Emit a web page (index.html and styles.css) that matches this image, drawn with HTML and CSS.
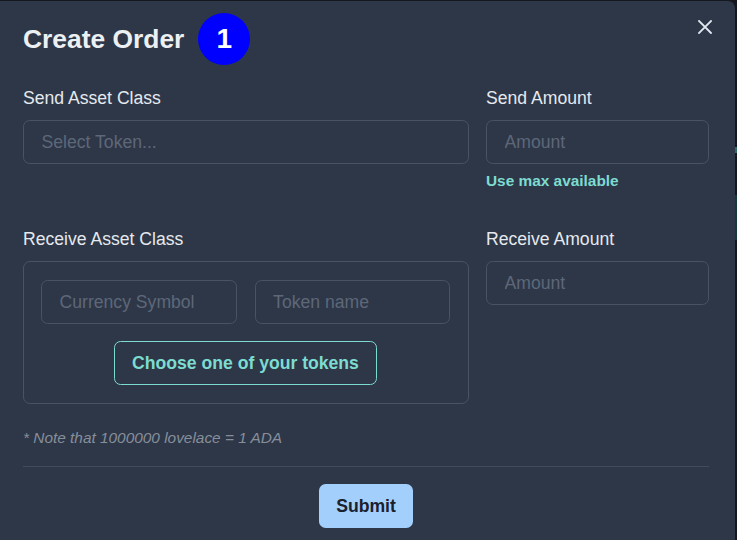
FILE: index.html
```html
<!DOCTYPE html>
<html lang="en">
<head>
<meta charset="utf-8">
<title>Create Order</title>
<link rel="stylesheet" href="styles.css">
</head>
<body>
<div class="modal">
  <header class="modal-header">
    <h2 class="title">Create Order</h2>
    <span class="badge">1</span>
    <button class="close" aria-label="Close">
      <svg width="14" height="14" viewBox="0 0 14 14"><path d="M1 1L13 13M13 1L1 13" stroke="#e2e8f0" stroke-width="1.8" stroke-linecap="square"/></svg>
    </button>
  </header>
  <div class="modal-body">
    <div class="grid">
      <div class="field">
        <label class="label">Send Asset Class</label>
        <input class="input" placeholder="Select Token...">
      </div>
      <div class="field">
        <label class="label">Send Amount</label>
        <input class="input" placeholder="Amount">
        <a class="helper">Use max available</a>
      </div>
      <div class="field">
        <label class="label">Receive Asset Class</label>
        <div class="box">
          <div class="pair">
            <input class="input" placeholder="Currency Symbol">
            <input class="input" placeholder="Token name">
          </div>
          <button class="outline-btn">Choose one of your tokens</button>
        </div>
      </div>
      <div class="field">
        <label class="label">Receive Amount</label>
        <input class="input" placeholder="Amount">
      </div>
    </div>
    <p class="note">* Note that 1000000 lovelace = 1 ADA</p>
  </div>
  <footer class="modal-footer">
    <button class="submit">Submit</button>
  </footer>
</div>
</body>
</html>
```
FILE: styles.css
```css
html, body {
  margin: 0;
  padding: 0;
  height: 100%;
  overflow: hidden;
}
body {
  background: linear-gradient(to bottom, #15181e 0 147px, #2f6b63 147px 153px, #15181e 153px 195px, #163a38 195px 240px, #15181e 240px);
  font-family: "Liberation Sans", Arial, sans-serif;
}
.modal {
  margin: 1px 2px 0 0;
  width: 735px;
  height: 560px;
  background: #2d3748;
  border-top-right-radius: 7px;
  position: relative;
  box-sizing: border-box;
  padding: 0 26px 0 23px;
}
.modal-header {
  display: flex;
  align-items: center;
  gap: 14px;
  padding-top: 12px;
  height: 52px;
}
.title {
  margin: 0;
  font-size: 26.4px;
  font-weight: 700;
  color: #edf0f3;
  line-height: 1;
}
.badge {
  width: 52px;
  height: 52px;
  border-radius: 50%;
  background: #0000ff;
  color: #ffffff;
  font-weight: 700;
  font-size: 28px;
  display: flex;
  align-items: center;
  justify-content: center;
}
.close {
  position: absolute;
  top: 18px;
  right: 22px;
  width: 16px;
  height: 16px;
  padding: 0;
  border: 0;
  background: transparent;
  display: flex;
  align-items: center;
  justify-content: center;
}
.modal-body {
  padding-top: 21px;
}
.grid {
  display: grid;
  grid-template-columns: 446px 223px;
  column-gap: 17px;
  row-gap: 35px;
  align-items: start;
}
.field {
  display: flex;
  flex-direction: column;
}
.label {
  font-size: 17.6px;
  line-height: 24px;
  color: #e6e9ee;
  margin-bottom: 10px;
}
.input {
  box-sizing: border-box;
  height: 44px;
  width: 100%;
  border: 1px solid #4b5363;
  border-radius: 6.6px;
  background: transparent;
  padding: 0 17.6px;
  font-family: "Liberation Sans", Arial, sans-serif;
  font-size: 17.6px;
  color: #e6e9ee;
  outline: none;
}
.input::placeholder {
  color: #5e6778;
}
.helper {
  margin-top: 6px;
  font-size: 15.4px;
  line-height: 22px;
  font-weight: 700;
  color: #7ddcd0;
}
.box {
  box-sizing: border-box;
  border: 1px solid #4b5363;
  border-radius: 7px;
  padding: 18px 18px 18px 17px;
  display: flex;
  flex-direction: column;
  align-items: center;
  gap: 17px;
}
.pair {
  display: flex;
  gap: 18px;
  width: 100%;
}
.pair .input {
  flex: 1;
  min-width: 0;
}
.outline-btn {
  height: 44px;
  padding: 0 17.6px;
  border: 1px solid #7ddcd0;
  border-radius: 6.6px;
  background: transparent;
  color: #7ddcd0;
  font-family: "Liberation Sans", Arial, sans-serif;
  font-size: 17.6px;
  font-weight: 700;
}
.note {
  margin: 23px 0 0;
  font-size: 15.4px;
  line-height: 22px;
  font-style: italic;
  color: #878e9a;
}
.modal-footer {
  margin-top: 17px;
  border-top: 1px solid #434b5a;
  padding-top: 17px;
  display: flex;
  justify-content: center;
}
.submit {
  height: 44px;
  padding: 0 17px;
  border: 0;
  border-radius: 6.6px;
  background: #a3cffd;
  color: #1a202c;
  font-family: "Liberation Sans", Arial, sans-serif;
  font-size: 17.6px;
  font-weight: 700;
}
```
